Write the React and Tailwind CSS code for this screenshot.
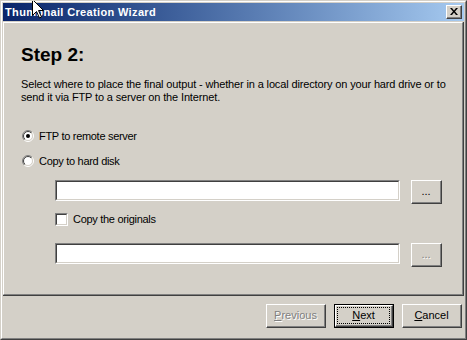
const raised =
  "border border-t-white border-l-white border-r-[#404040] border-b-[#404040]";
const raisedInner = "border-r border-b border-r-[#808080] border-b-[#808080]";
const sunken =
  "border border-t-[#808080] border-l-[#808080] border-r-white border-b-white";
const sunkenInner =
  "border border-t-[#404040] border-l-[#404040] border-r-[#d4d0c8] border-b-[#d4d0c8]";

const Radio = ({ checked }) => (
  <svg width="12" height="12" viewBox="0 0 12 12" className="shrink-0">
    <defs>
      <linearGradient id="ro" x1="0" y1="0" x2="1" y2="1">
        <stop offset="0.5" stopColor="#808080" />
        <stop offset="0.5" stopColor="#ffffff" />
      </linearGradient>
      <linearGradient id="ri" x1="0" y1="0" x2="1" y2="1">
        <stop offset="0.5" stopColor="#404040" />
        <stop offset="0.5" stopColor="#d4d0c8" />
      </linearGradient>
    </defs>
    <circle cx="6" cy="6" r="5.5" fill="none" stroke="url(#ro)" />
    <circle cx="6" cy="6" r="4.5" fill="#fff" stroke="url(#ri)" />
    {checked && <circle cx="6" cy="6" r="2" fill="#000" />}
  </svg>
);

const TextBox = () => (
  <div className={`w-[345px] h-[21px] ${sunken}`}>
    <div className={`h-full bg-white ${sunkenInner}`} />
  </div>
);

const Button = ({ children, className = "", disabled }) => (
  <div className={`flex ${raised} ${className}`}>
    <div
      className={`flex-1 flex items-center justify-center ${raisedInner} ${
        disabled ? "text-[#808080] [text-shadow:1px_1px_0_#ffffff]" : "text-black"
      }`}
    >
      {children}
    </div>
  </div>
);

export default function App() {
  return (
    <div className="relative w-[467px] h-[340px] overflow-hidden bg-[#d4d0c8] font-['Liberation_Sans',Arial,sans-serif] text-[11px] text-black border border-t-[#d4d0c8] border-l-[#d4d0c8] border-r-[#404040] border-b-[#404040]">
      <div className="h-full flex flex-col p-[1px] border border-t-white border-l-white border-r-[#808080] border-b-[#808080]">
        {/* Title bar */}
        <div className="h-[18px] flex items-center justify-between bg-gradient-to-r from-[#0a246a] to-[#a6caf0] pl-[2px] pr-[2px]">
          <span className="text-white font-bold text-[11px] tracking-[0.35px] leading-none">
            Thumbnail Creation Wizard
          </span>
          <div className={`w-[16px] h-[14px] flex bg-[#d4d0c8] ${raised}`}>
            <div className={`flex-1 flex items-center justify-center ${raisedInner}`}>
              <svg width="8" height="7" viewBox="0 0 8 7">
                <path d="M0 0h2l2 2.5 2-2.5h2L5 3.5 8 7H6L4 4.5 2 7H0l3-3.5z" fill="#000" />
              </svg>
            </div>
          </div>
        </div>

        {/* Page */}
        <div className="mt-[1px] h-[274px] flex border-r border-b border-r-[#404040] border-b-[#404040]">
          <div className="flex-1 flex flex-col pl-[17px] border border-t-white border-l-white border-r-[#808080] border-b-[#808080]">
            <h1 className="mt-[22px] text-[19px] leading-[19px] font-bold">Step 2:</h1>
            <p className="mt-[14px] leading-[13px] tracking-[-0.14px]">
              Select where to place the final output - whether in a local directory on your hard drive or to
              <br />
              send it via FTP to a server on the Internet.
            </p>

            <div className="mt-[26px] h-[13px] flex items-start gap-[5px] pl-[1px] leading-[13px] tracking-[-0.3px]">
              <Radio checked />
              <span>FTP to remote server</span>
            </div>
            <div className="mt-[12px] h-[13px] flex items-start gap-[5px] pl-[1px] leading-[13px] tracking-[-0.3px]">
              <Radio />
              <span>Copy to hard disk</span>
            </div>

            <div className="mt-[12px] ml-[34px] flex items-start gap-[11px]">
              <TextBox />
              <Button className="w-[31px] h-[24px]">...</Button>
            </div>

            <div className="mt-[9px] ml-[34px] h-[13px] flex items-center gap-[5px] leading-[13px] tracking-[-0.3px]">
              <div className={`w-[13px] h-[13px] ${sunken}`}>
                <div className={`h-full bg-white ${sunkenInner}`} />
              </div>
              <span>Copy the originals</span>
            </div>

            <div className="mt-[17px] ml-[34px] flex items-start gap-[11px]">
              <TextBox />
              <Button className="w-[31px] h-[24px]" disabled>
                ...
              </Button>
            </div>
          </div>
        </div>

        {/* Buttons */}
        <div className="flex-1 flex justify-end items-start gap-[8px] pt-[8px] pr-[2px] leading-none">
          <Button className="w-[60px] h-[24px]" disabled>
            <span>
              <span className="underline">P</span>revious
            </span>
          </Button>
          <div className="w-[60px] h-[24px] flex border border-black">
            <div className={`flex-1 flex ${raised}`}>
              <div className={`flex-1 flex p-[1px] ${raisedInner}`}>
                <div className="flex-1 flex items-center justify-center border border-dotted border-black">
                  <span>
                    <span className="underline">N</span>ext
                  </span>
                </div>
              </div>
            </div>
          </div>
          <Button className="w-[60px] h-[24px]">
            <span>
              <span className="underline">C</span>ancel
            </span>
          </Button>
        </div>
      </div>

      {/* Mouse pointer */}
      <svg
        width="13"
        height="20"
        viewBox="0 0 13 20"
        className="absolute left-[31px] top-[-2px]"
      >
        <path
          d="M0.5 0.5V16.5L4.5 12.5L7.5 19L9.5 18L6.5 11.5H11.5Z"
          fill="#fff"
          stroke="#000"
          strokeWidth="1"
          strokeLinejoin="miter"
        />
      </svg>
    </div>
  );
}
